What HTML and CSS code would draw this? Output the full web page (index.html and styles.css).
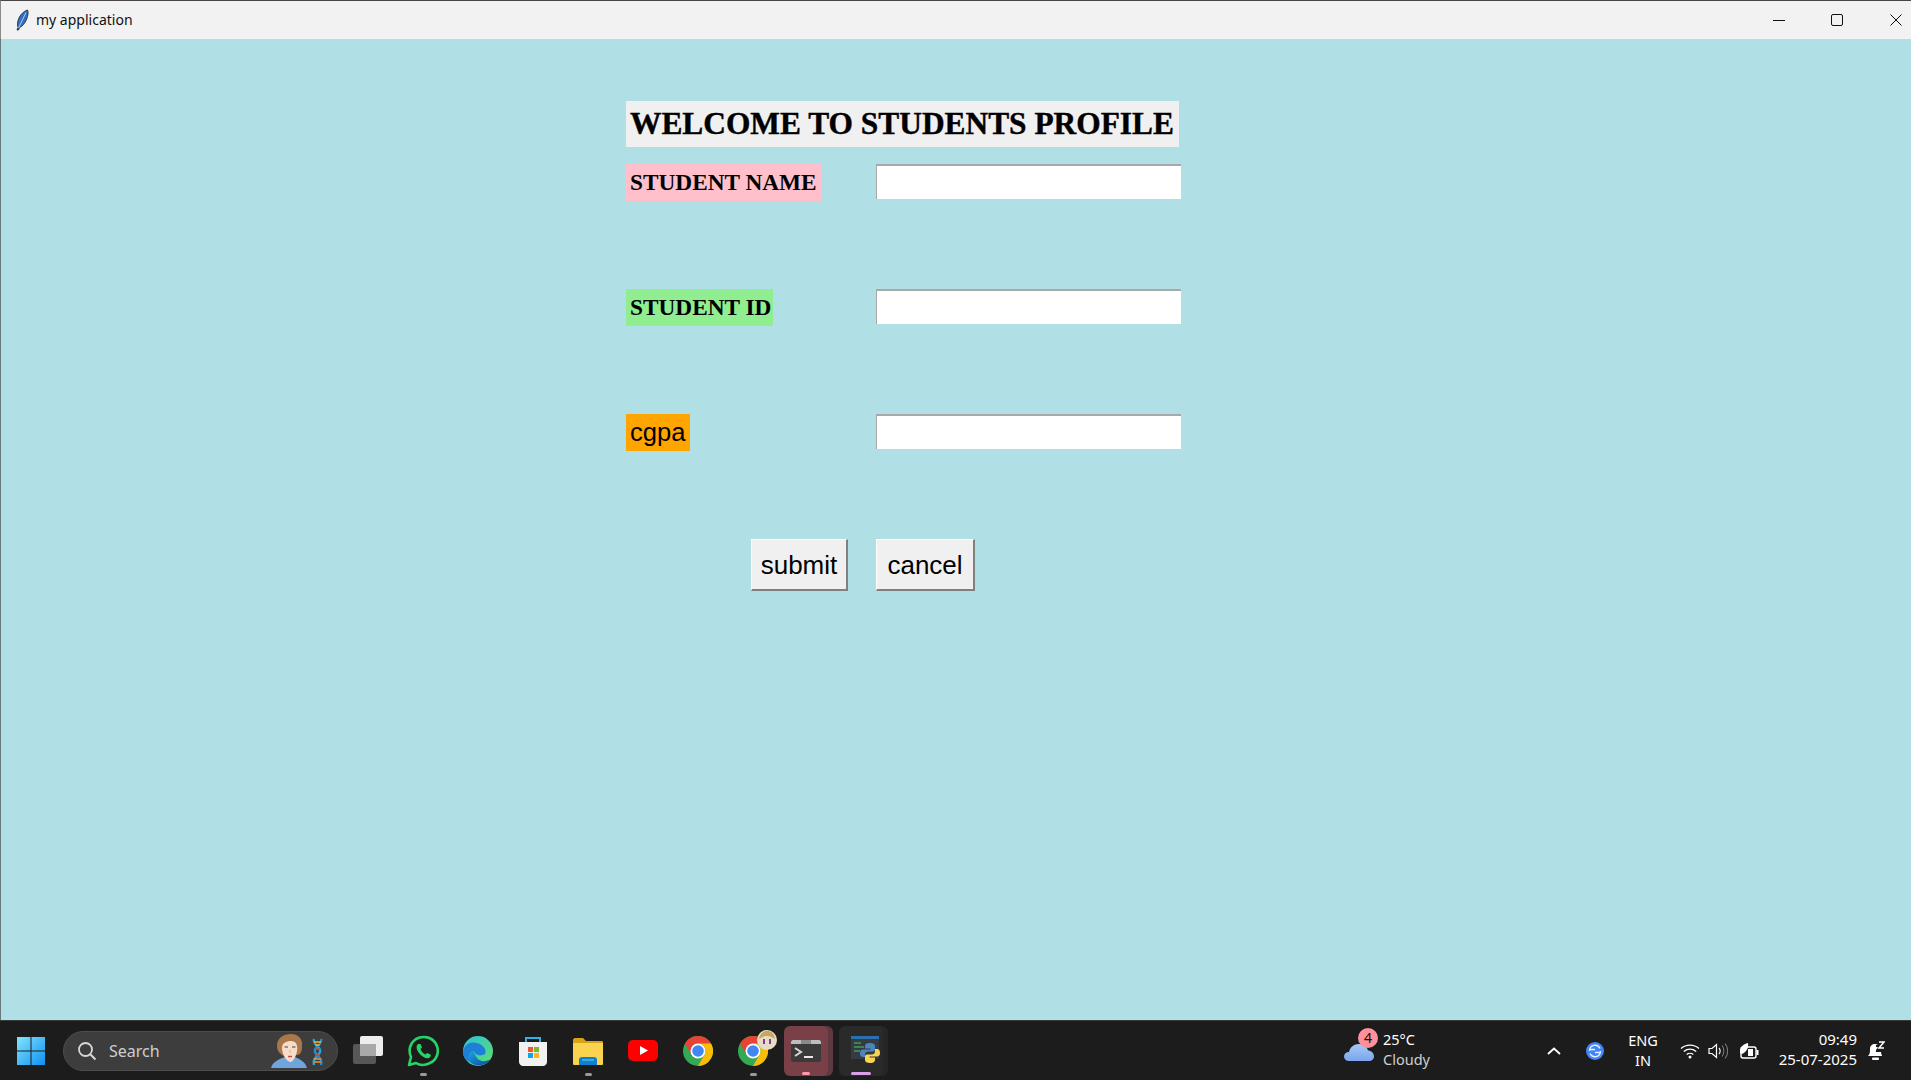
FILE: index.html
```html
<!DOCTYPE html>
<html lang="en">
<head>
<meta charset="utf-8">
<title>my application</title>
<link rel="stylesheet" href="styles.css">
</head>
<body>
<div class="window">
  <header class="titlebar">
    <svg class="app-icon" viewBox="0 0 14 22" width="14" height="22"><path d="M12.500 1C8 2.500 4 7 2.800 12.500 2.300 15 2.500 17 3 18.500L2 21 3.500 21 4.500 18.500C8 17 11 13 12.500 7.500 13.200 5 13.300 2.500 12.500 1Z" fill="#2f6fc4" stroke="#30363f" stroke-width="1"/><path d="M11 3.500 3.500 19" stroke="#cfe0f5" stroke-width=".8" fill="none"/></svg>
    <span class="app-title">my application</span>
    <div class="win-controls">
      <span class="win-btn"><svg width="12" height="12" viewBox="0 0 12 12"><path d="M0 6.500H12" stroke="#111" stroke-width="1"/></svg></span>
      <span class="win-btn"><svg width="12" height="12" viewBox="0 0 12 12"><rect x=".5" y=".5" width="11" height="11" rx="1.500" fill="none" stroke="#111" stroke-width="1"/></svg></span>
      <span class="win-btn win-close"><svg width="12" height="12" viewBox="0 0 12 12"><path d="M.5.500 11.500 11.500M11.500.500.500 11.500" stroke="#111" stroke-width="1"/></svg></span>
    </div>
  </header>
  <main class="content">
    <div class="form">
      <h1 class="heading">WELCOME TO STUDENTS PROFILE</h1>
      <label class="label label-name">STUDENT NAME</label>
      <input class="entry" type="text">
      <label class="label label-id">STUDENT ID</label>
      <input class="entry" type="text">
      <label class="label label-cgpa">cgpa</label>
      <input class="entry" type="text">
      <button class="btn btn-submit" type="button">submit</button>
      <button class="btn btn-cancel" type="button">cancel</button>
    </div>
  </main>
  <footer class="taskbar">
    <span class="slot slot-start">
      <svg width="30" height="30" viewBox="0 0 30 30"><defs><linearGradient id="w" gradientUnits="userSpaceOnUse" x1="0" y1="0" x2="30" y2="30"><stop offset="0" stop-color="#86e8ff"/><stop offset="1" stop-color="#0a8cf0"/></linearGradient></defs><path d="M1 1H14.500V14.500H1ZM15.500 1H29V14.500H15.500ZM1 15.500H14.500V29H1ZM15.500 15.500H29V29H15.500Z" fill="url(#w)"/></svg>
    </span>
    <div class="search">
      <svg width="20" height="20" viewBox="0 0 20 20"><circle cx="8.500" cy="8.500" r="6.500" fill="none" stroke="#d8d8d8" stroke-width="1.800"/><path d="M13.500 13.500 18.500 18.500" stroke="#d8d8d8" stroke-width="2"/></svg>
      <span class="search-text">Search</span>
      <svg class="search-art" width="53" height="34" viewBox="0 0 53 34"><path d="M0 34C2 27 9 25 14 23L24 23C28 25 34 27 36 34Z" fill="#6fa5dc"/><path d="M6 12C6 4 12 0 20 0 28 0 32 6 31 12 31 17 30 20 27 21L13 22C9 20 6 17 6 12Z" fill="#a8784a"/><path d="M11 14C11 9 15 7 20 7 25 7 27 11 26 17 25 23 22 28 19 28 15 27 11 20 11 14Z" fill="#f6dccb"/><path d="M17 22.500H21" stroke="#c0494c" stroke-width="1.400"/><path d="M13.500 13H17M21 13H24.500" stroke="#5a3a2a" stroke-width="1"/><path d="M19 16V19" stroke="#dcae94" stroke-width="1"/><path d="M43 5C41 11 51 13 49 18 47 23 41 24 43 31" fill="none" stroke="#1ea8e0" stroke-width="2.400"/><path d="M50 5C52 11 42 13 44 18 46 23 52 24 50 31" fill="none" stroke="#1f8fd8" stroke-width="2.400"/><path d="M43 8H50M44.500 11H48.500" stroke="#f0b52e" stroke-width="1.500"/><path d="M44 15H49" stroke="#e0432e" stroke-width="1.500"/><path d="M44 21H49" stroke="#e0432e" stroke-width="1.500"/><path d="M43 25H50M43 28H50" stroke="#f0902e" stroke-width="1.500"/></svg>
    </div>
    <span class="slot">
      <svg width="30" height="30" viewBox="0 0 30 30"><rect x="7" y="0" width="23" height="20" rx="2" fill="#ededed"/><rect x="0" y="8" width="23" height="20" rx="2" fill="#5c5c5c" opacity=".92"/><rect x="7" y="8" width="16" height="12" fill="#a9a9a9"/></svg>
    </span>
    <span class="slot slot-open">
      <svg width="32" height="32" viewBox="0 0 32 32"><path d="M2 30 4 22C1 15 3 8 9 4 16 0 25 2 29 9 33 16 30 25 23 28 17 31 12 30 9 28Z" fill="none" stroke="#25d366" stroke-width="2.600" stroke-linejoin="round"/><path d="M11 9C9 11 9 14 12 18 15 22 19 24 22 23 24 22 24 20 23.500 19.500L20 18 18.500 19.500C16 18.500 14 16 13.500 14L15 12.500 13.500 9Z" fill="#25d366"/></svg>
    </span>
    <span class="slot">
      <svg width="32" height="32" viewBox="0 0 32 32"><defs><linearGradient id="e1" x1="0" y1="0" x2="1" y2="1"><stop offset="0" stop-color="#2cc0dc"/><stop offset="1" stop-color="#5fe06a"/></linearGradient><linearGradient id="e2" x1="0" y1="0" x2="1" y2="1"><stop offset="0" stop-color="#1aa0e8"/><stop offset="1" stop-color="#0c4a9c"/></linearGradient></defs><circle cx="16" cy="16" r="15" fill="url(#e1)"/><path d="M1 17C2 9 9 6 15 8 21 10 25 14 23 19 18 22 13 20 12 16 8 16 5 22 8 27 3 25 1 21 1 17Z" fill="#1f7fd6"/><path d="M12 16C8 16 5 22 8 27 13 32 23 32 29 24 24 27 18 27 15 23 13 20 12 18 12 16Z" fill="url(#e2)"/></svg>
    </span>
    <span class="slot">
      <svg width="30" height="32" viewBox="0 0 30 32"><path d="M8 8V3H22V8" fill="none" stroke="#28b5e8" stroke-width="2"/><path d="M1 7H29V27C29 29 27 31 25 31H5C3 31 1 29 1 27Z" fill="#f1f1f1"/><rect x="10" y="12" width="5" height="5" fill="#ea5a2c"/><rect x="16" y="12" width="5" height="5" fill="#7cb82f"/><rect x="10" y="18" width="5" height="5" fill="#0ea5e8"/><rect x="16" y="18" width="5" height="5" fill="#fdb813"/></svg>
    </span>
    <span class="slot slot-open">
      <svg width="32" height="28" viewBox="0 0 32 28"><path d="M1 3C1 2 2 1 3 1H11L14 4H30C31 4 31 5 31 6V10H1Z" fill="#d9a218"/><rect x="1" y="6" width="30" height="22" rx="1" fill="#fbd44f"/><path d="M7 28V23C7 21 8 20 10 20H22C24 20 25 21 25 23V28Z" fill="#0f7fd0"/><path d="M10 23H22" stroke="#4cb3ee" stroke-width="1.500"/></svg>
    </span>
    <span class="slot">
      <svg width="30" height="22" viewBox="0 0 30 22"><rect width="30" height="21" rx="5" fill="#f00"/><path d="M12 6 20 10.500 12 15Z" fill="#fff"/></svg>
    </span>
    <span class="slot">
      <svg class="chrome" width="30" height="30" viewBox="0 0 30 30"><circle cx="15" cy="15" r="15" fill="#34a853"/><path d="M15 0A15 15 0 0 1 28 7.500H15A7.500 7.500 0 0 0 8.500 11.250L8.500 18.750 2 7.500A15 15 0 0 1 15 0Z" fill="#ea4335"/><path d="M28 7.500A15 15 0 0 1 15 30L21.500 18.750A7.500 7.500 0 0 0 21.500 11.250 7.500 7.500 0 0 0 15 7.500Z" fill="#fbbc05"/><circle cx="15" cy="15" r="7.500" fill="#fff"/><circle cx="15" cy="15" r="5.800" fill="#4285f4"/></svg>
    </span>
    <span class="slot slot-open">
      <span class="chrome-wrap">
        <svg width="30" height="30" viewBox="0 0 30 30"><circle cx="15" cy="15" r="15" fill="#34a853"/><path d="M15 0A15 15 0 0 1 28 7.500H15A7.500 7.500 0 0 0 8.500 11.250L8.500 18.750 2 7.500A15 15 0 0 1 15 0Z" fill="#ea4335"/><path d="M28 7.500A15 15 0 0 1 15 30L21.500 18.750A7.500 7.500 0 0 0 21.500 11.250 7.500 7.500 0 0 0 15 7.500Z" fill="#fbbc05"/><circle cx="15" cy="15" r="7.500" fill="#fff"/><circle cx="15" cy="15" r="5.800" fill="#4285f4"/></svg>
        <svg class="avatar" width="20" height="20" viewBox="0 0 20 20"><circle cx="10" cy="10" r="10" fill="#e8dcc4"/><path d="M2 9C3 3 7 1 10 1 14 1 17 3 18 9 15 7 13 6 10 6 7 6 5 7 2 9Z" fill="#c8a560"/><path d="M6 9H8V14H6ZM12 9H14V14H12Z" fill="#7a3f9a"/></svg>
      </span>
    </span>
    <span class="run run-terminal">
      <svg width="30" height="22" viewBox="0 0 30 22"><rect width="30" height="22" rx="2" fill="#3a3a3a"/><path d="M0 2C0 1 1 0 2 0H28C29 0 30 1 30 2V4H0Z" fill="#bdbdbd"/><path d="M10 0H20V4H10Z" fill="#8a8a8a"/><path d="M4 8 10 12 4 16" fill="none" stroke="#d8d8d8" stroke-width="2"/><path d="M13 17H22" stroke="#e8e8e8" stroke-width="2"/></svg>
    </span>
    <span class="run run-python">
      <svg width="30" height="28" viewBox="0 0 30 28"><rect width="28" height="23" fill="#353b42"/><rect width="28" height="3" fill="#2a6fb0"/><path d="M3 7H10M3 11H13M3 15H9" stroke="#3f9a5a" stroke-width="1.300"/><g transform="translate(9,7)"><path d="M10 0C6 0 5 1.500 5 3V5.500H10.500V6.500H3C1 6.500 0 8 0 10 0 12.500 1 14 3 14H5V11.500C5 9.500 6.500 8.500 8 8.500H13C14.500 8.500 15 7.500 15 6V3C15 1 13 0 10 0Z" fill="#4a86bd"/><path d="M10 20C14 20 15 18.500 15 17V14.500H9.500V13.500H17C19 13.500 20 12 20 10 20 7.500 19 6 17 6H15V8.500C15 10.500 13.500 11.500 12 11.500H7C5.500 11.500 5 12.500 5 14V17C5 19 7 20 10 20Z" fill="#fbd44f"/></g></svg>
    </span>
    <div class="tray">
      <div class="weather">
        <span class="weather-icon">
          <svg width="30" height="20" viewBox="0 0 30 20"><defs><linearGradient id="c" x1="0" y1="0" x2="0" y2="1"><stop offset="0" stop-color="#a8c8f5"/><stop offset="1" stop-color="#7aa6ee"/></linearGradient></defs><path d="M5 19C2 19 0 17 0 14.500 0 12 2 10 5 10 6 5 10 2 15 2 20 2 23 5 24 8.500 27 8.500 30 11 30 14.500 30 17 28 19 25 19Z" fill="url(#c)"/></svg>
          <span class="badge">4</span>
        </span>
        <div class="weather-text">
          <span class="temp">25°C</span>
          <span class="cond">Cloudy</span>
        </div>
      </div>
      <svg class="chev" width="14" height="8" viewBox="0 0 14 8"><path d="M1 7 7 1.500 13 7" fill="none" stroke="#fff" stroke-width="1.800"/></svg>
      <svg class="sync" width="18" height="18" viewBox="0 0 18 18"><circle cx="9" cy="9" r="9" fill="#4285f4"/><path d="M3.500 9A5.500 5.500 0 0 1 14 6.500M14.500 9A5.500 5.500 0 0 1 4 11.500M4 7.500H9M9 10.500H14" fill="none" stroke="#e8f0ff" stroke-width="1.300"/></svg>
      <div class="lang"><span>ENG</span><span>IN</span></div>
      <svg class="wifi" width="20" height="16" viewBox="0 0 20 16"><path d="M1 5.500C6 1 14 1 19 5.500M3.800 8.500C7.500 5.500 12.500 5.500 16.200 8.500M6.700 11.500C8.500 10 11.500 10 13.300 11.500" fill="none" stroke="#fff" stroke-width="1.300"/><circle cx="10" cy="14" r="1.500" fill="#fff"/></svg>
      <svg class="vol" width="20" height="18" viewBox="0 0 20 18"><path d="M1 6.500H4L8.500 2.500V15.500L4 11.500H1Z" fill="none" stroke="#fff" stroke-width="1.200"/><path d="M11 6C12.500 7.500 12.500 10.500 11 12" fill="none" stroke="#fff" stroke-width="1.100"/><path d="M14 3.500C16.500 6.500 16.500 11.500 14 14.500M17 1.500C20.500 5.500 20.500 12.500 17 16.500" fill="none" stroke="#777" stroke-width="1.100"/></svg>
      <svg class="batt" width="20" height="18" viewBox="0 0 20 18"><rect x="2" y="5" width="15" height="11" rx="2" fill="none" stroke="#fff" stroke-width="1.400"/><rect x="17.500" y="8" width="2" height="5" fill="#fff"/><path d="M1 11C1 5 4 2 9 1 10 6 7 10 3 12Z" fill="#fff"/><rect x="9" y="7" width="5" height="7" fill="#fff"/></svg>
      <div class="clock"><span>09:49</span><span>25-07-2025</span></div>
      <svg class="bell" width="18" height="20" viewBox="0 0 18 20"><path d="M1 15C3 13 3 11 3 8 3 5 5 3 8 3 9 3 10 3.500 11 4H9V6H11L9 9V11H14C14 13 15 14 15 15Z" fill="#fff"/><rect x="5" y="16.500" width="7" height="2.500" rx="1" fill="#fff"/><path d="M12 1H17L12 7H17" fill="none" stroke="#fff" stroke-width="1.500"/></svg>
    </div>
  </footer>
</div>
</body>
</html>
```

FILE: styles.css
```css
* { box-sizing: border-box; }
html, body { margin: 0; height: 100%; overflow: hidden; }
body { background: #1c1c1c; }

.window {
  width: 1911px;
  height: 1080px;
  display: flex;
  flex-direction: column;
  background: #b0dfe5;
}

.titlebar {
  height: 39px;
  flex: none;
  display: flex;
  align-items: center;
  background: #f2f2f2;
  border-top: 1px solid #4a4448;
  border-left: 1px solid #8a8a8a;
  padding-left: 14px;
  font-family: "Noto Sans", sans-serif;
  color: #111;
}
.app-icon { flex: none; margin-right: 7px; }
.app-title { font-size: 14px; margin-top: -2px; }
.win-controls { margin-left: auto; display: flex; }
.win-btn {
  width: 58px;
  height: 38px;
  display: flex;
  align-items: center;
  justify-content: center;
}
.win-close { width: 45px; justify-content: flex-end; padding-right: 9px; }

.content {
  flex: 1;
  background: #b0dfe5;
  border-left: 1px solid #6a7a7c;
  padding: 62px 0 0 625px;
}
.form {
  display: grid;
  grid-template-columns: 250px 305px;
  grid-template-rows: 63px 125px 125px 125px auto;
  align-items: start;
  justify-items: start;
}
.heading {
  grid-column: 1 / 3;
  margin: 0;
  width: 553px;
  height: 46px;
  background: #f0f0f0;
  color: #000;
  font-family: "Liberation Serif", serif;
  font-weight: 700;
  font-size: 31.4px;
  line-height: 46px;
  padding-left: 4px;
  white-space: nowrap;
  -webkit-text-stroke: .4px #000;
}
.label {
  height: 37px;
  padding: 0 4px;
  color: #000;
  line-height: 37px;
  white-space: nowrap;
}
.label-name, .label-id {
  font-family: "Liberation Serif", serif;
  font-weight: 700;
  font-size: 23.3px;
}
.label-name { background: #ffc0cb; width: 195px; }
.label-id { background: #90ee90; width: 147px; }
.label-cgpa {
  background: #ffa500;
  font-family: "Liberation Sans", sans-serif;
  font-size: 25.6px;
  width: 64px;
}
.entry {
  width: 305px;
  height: 35px;
  background: #fff;
  margin: 0;
  padding: 0;
  border-style: solid;
  border-width: 2px 0 0 1px;
  border-color: #a8a8a8;
  outline: none;
}
.btn {
  height: 52px;
  margin: 0;
  padding: 2px 0 0;
  background: #f0f0f0;
  color: #000;
  font-family: "Liberation Sans", sans-serif;
  font-size: 26px;
  border-style: solid;
  border-width: 1.5px 2px 2px 1.5px;
  border-color: #fff #808080 #808080 #fff;
}
.btn-submit { width: 97px; justify-self: end; margin-right: 28px; }
.btn-cancel { width: 99px; }

.taskbar {
  height: 60px;
  flex: none;
  display: flex;
  align-items: center;
  background: #1c1c1c;
  border-top: 1px solid #3a3a3a;
  padding-left: 3.500px;
  font-family: "Noto Sans", sans-serif;
  color: #fff;
}
.slot {
  position: relative;
  width: 55px;
  height: 50px;
  flex: none;
  display: flex;
  align-items: center;
  justify-content: center;
}
.slot-open::after {
  content: "";
  position: absolute;
  left: 24px;
  bottom: 0;
  width: 7px;
  height: 3px;
  border-radius: 2px;
  background: #9a9a9a;
}
.search {
  width: 275px;
  height: 40px;
  flex: none;
  margin: 0 2.500px 0 4.500px;
  display: flex;
  align-items: center;
  padding: 0 13px 0 13px;
  background: #3d3d3d;
  border: 1px solid #4c4c4c;
  border-radius: 20px;
}
.search-text { margin-left: 12px; font-size: 16px; color: #cfcfcf; }
.search-art { margin-left: auto; }
.chrome-wrap { position: relative; display: flex; }
.avatar { position: absolute; right: -9px; top: -6px; }
.run {
  position: relative;
  height: 50px;
  flex: none;
  display: flex;
  align-items: center;
  justify-content: center;
  border-radius: 6px;
}
.run::after {
  content: "";
  position: absolute;
  bottom: 1px;
  height: 3px;
  border-radius: 2px;
}
.run-terminal {
  width: 44px;
  margin-left: 3px;
  background: #7a4048;
  box-shadow: 5px 0 0 #5e3a40;
}
.run-terminal::after { width: 8px; background: #ff9aa8; }
.run-python {
  width: 44px;
  margin-left: 11px;
  background: #2a2a2a;
  box-shadow: 5px 0 0 #262626;
}
.run-python svg { margin-left: 11px; margin-top: -1px; }
.run-python::after { width: 20px; background: #d9a0e8; }

.tray { margin-left: auto; display: flex; align-items: center; height: 100%; }
.weather { display: flex; align-items: center; }
.weather-icon { position: relative; display: flex; margin-top: 2px; }
.badge {
  position: absolute;
  right: -4px;
  top: -14px;
  width: 20px;
  height: 20px;
  border-radius: 50%;
  background: #ff8f9a;
  color: #111;
  font-size: 14px;
  line-height: 20px;
  text-align: center;
}
.weather-text {
  width: 164px;
  margin-left: 9px;
  margin-top: -4px;
  display: flex;
  flex-direction: column;
  font-size: 14.5px;
  line-height: 20px;
}
.cond { color: #cfcfcf; }
.sync { margin-left: 25px; }
.lang {
  width: 40px;
  margin-left: 19px;
  margin-top: -2px;
  display: flex;
  flex-direction: column;
  align-items: center;
  font-size: 14.5px;
  line-height: 20px;
}
.wifi { margin-left: 17px; }
.vol { margin-left: 8px; }
.batt { margin-left: 11px; }
.clock {
  width: 82px;
  margin-left: 16px;
  margin-top: -4px;
  display: flex;
  flex-direction: column;
  align-items: flex-end;
  font-size: 15px;
  line-height: 20px;
}
.bell { margin-left: 10px; margin-right: 26px; }
```
